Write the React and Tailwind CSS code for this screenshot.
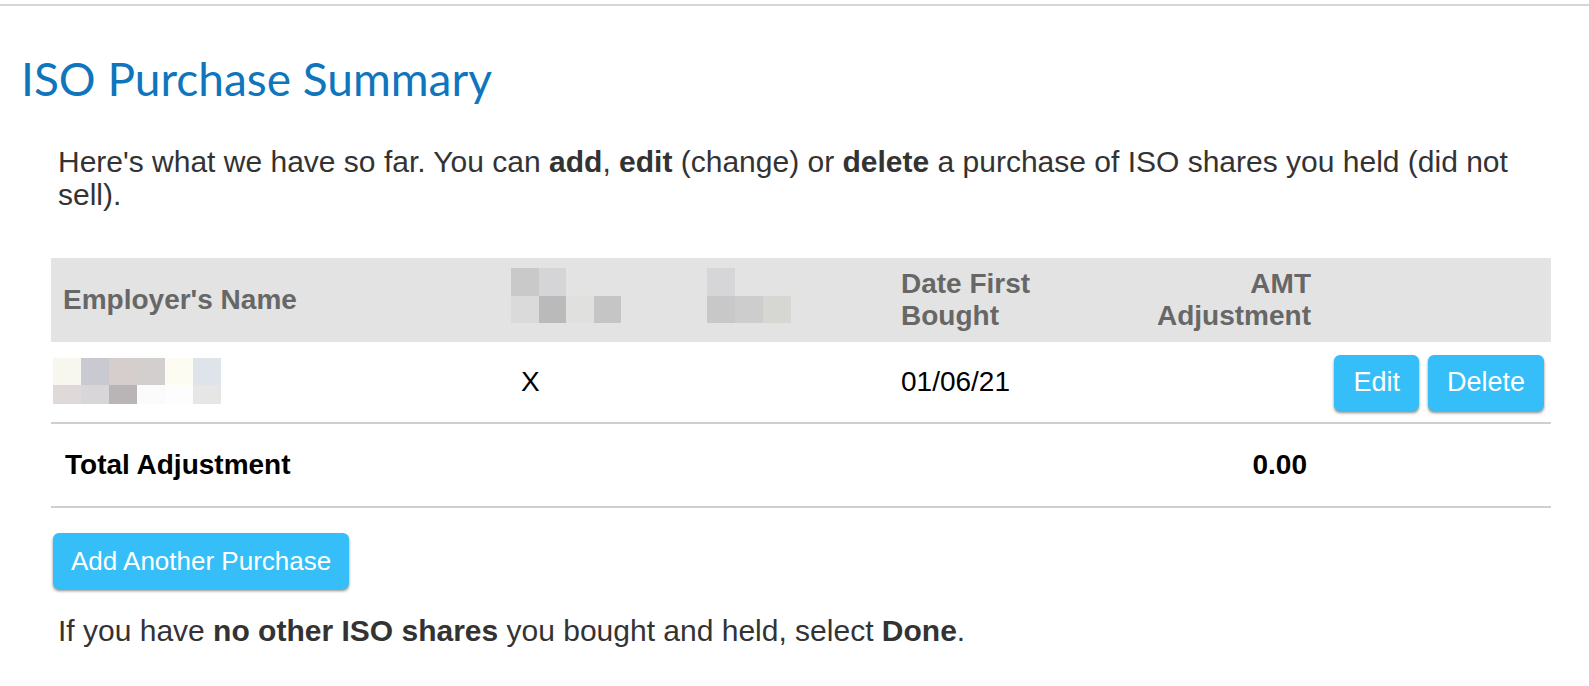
import React from "react";

function Mosaic({ rows, cell = "w-[28px]", heights }) {
  return (
    <div className="flex flex-col">
      {rows.map((r, i) => (
        <div key={i} className={"flex " + heights[i]}>
          {r.map((c, j) => (
            <div key={j} className={cell + " h-full " + c} />
          ))}
        </div>
      ))}
    </div>
  );
}

const empRows = [
  ["bg-[#f7f6ef]", "bg-[#c9c9d1]", "bg-[#d6cdcd]", "bg-[#d4cfcf]", "bg-[#fcfcf3]", "bg-[#dfe4eb]"],
  ["bg-[#e0d9d9]", "bg-[#d8d6d8]", "bg-[#b9b5b7]", "bg-[#fbfbfb]", "bg-[#fdfdfd]", "bg-[#e6e6e6]"],
];
const col2Rows = [
  ["bg-[#c9c9c9]", "bg-[#d5d5d7]", "bg-transparent", "bg-transparent"],
  ["bg-[#dadada]", "bg-[#bababa]", "bg-[#e0e0de]", "bg-[#c5c5c5]"],
];
const col3Rows = [
  ["bg-[#d6d6d8]", "bg-transparent", "bg-transparent"],
  ["bg-[#c8c8c8]", "bg-[#cdcdcd]", "bg-[#d6d6d3]"],
];

function Btn({ children, className = "" }) {
  return (
    <button
      className={
        "h-[56px] rounded-[6px] bg-[#36bef8] text-white leading-none shadow-[0_2px_3px_rgba(0,0,0,0.45)] " +
        className
      }
    >
      {children}
    </button>
  );
}

export default function App() {
  return (
    <div className="min-h-[686px] w-full bg-white font-['Liberation_Sans',Arial,sans-serif] text-[#333]">
      <div className="h-[4px]" />
      <div className="h-[2px] bg-[#d6d6d6]" />
      <h1 className="ml-[21px] mt-[46px] font-['Lato',sans-serif] text-[46px] leading-[54px] text-[#0f75bd]">
        ISO Purchase Summary
      </h1>
      <div className="pl-[51px] pr-[38px]">
        <p className="mt-[39px] pl-[7px] text-[30px] leading-[33px] text-[#333]">
          Here's what we have so far. You can <b>add</b>, <b>edit</b> (change) or <b>delete</b> a purchase of ISO
          shares you held (did not sell).
        </p>

        <div className="mt-[47px] grid grid-cols-[460px_196px_194px_200px_210px_1fr]">
          {/* header */}
          <div className="col-span-6 grid h-[84px] grid-cols-subgrid items-center bg-[#e3e3e3] text-[28px] font-bold leading-[32px] text-[#676767]">
            <div className="pl-[12px]">Employer's Name</div>
            <div className="mb-[9px]">
              <Mosaic rows={col2Rows} cell="w-[27.5px]" heights={["h-[27.5px]", "h-[27.5px]"]} />
            </div>
            <div className="mb-[9px]">
              <Mosaic rows={col3Rows} cell="w-[28px]" heights={["h-[27.5px]", "h-[27.5px]"]} />
            </div>
            <div>
              Date First
              <br />
              Bought
            </div>
            <div className="text-right">
              AMT
              <br />
              Adjustment
            </div>
            <div />
          </div>

          {/* row */}
          <div className="col-span-6 grid h-[82px] grid-cols-subgrid items-center border-b-2 border-[#cfcfcf] text-[28px] leading-[32px] text-black">
            <div className="mb-[3px] pl-[2px]">
              <Mosaic rows={empRows} cell="w-[28px]" heights={["h-[27px]", "h-[19px]"]} />
            </div>
            <div className="pl-[10px]">X</div>
            <div />
            <div>01/06/21</div>
            <div />
            <div className="flex justify-end gap-[9px] pr-[7px] pt-[1px]">
              <Btn className="px-[19px] text-[27px]">Edit</Btn>
              <Btn className="px-[19px] text-[27px]">Delete</Btn>
            </div>
          </div>

          {/* total */}
          <div className="col-span-6 grid h-[84px] grid-cols-subgrid items-center border-b-2 border-[#cfcfcf] text-[28px] font-bold leading-[32px] text-black">
            <div className="pl-[14px]">Total Adjustment</div>
            <div />
            <div />
            <div />
            <div className="pr-[4px] text-right">0.00</div>
            <div />
          </div>
        </div>

        <div className="mt-[25px] pl-[2px]">
          <Btn className="h-[55px] px-[18px] text-[26px]">Add Another Purchase</Btn>
        </div>

        <p className="mt-[25px] pl-[7px] text-[30px] leading-[33px] text-[#333]">
          If you have <b>no other ISO shares</b> you bought and held, select <b>Done</b>.
        </p>
      </div>
    </div>
  );
}
